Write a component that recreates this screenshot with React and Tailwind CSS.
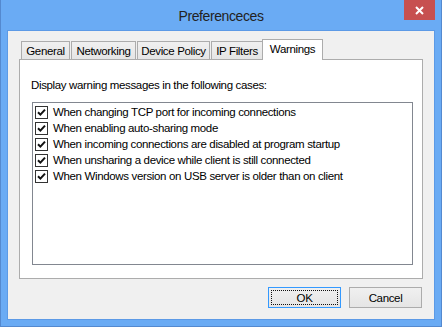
const items = [
  'When changing TCP port for incoming connections',
  'When enabling auto-sharing mode',
  'When incoming connections are disabled at program startup',
  'When unsharing a device while client is still connected',
  'When Windows version on USB server is older than on client',
]

const tabs = [
  { label: 'General', w: 'w-[49px]' },
  { label: 'Networking', w: 'w-[65px]' },
  { label: 'Device Policy', w: 'w-[73px]' },
  { label: 'IP Filters', w: 'w-[52px]' },
]

function Check() {
  return (
    <div className="w-[13px] h-[13px] border border-[#333] bg-white flex items-center justify-center shrink-0">
      <svg width="9" height="9" viewBox="0 0 9 9">
        <path d="M1 4.2 L3.4 6.6 L8 1.6" fill="none" stroke="#111" strokeWidth="2" />
      </svg>
    </div>
  )
}

export default function App() {
  return (
    <div className="w-[442px] h-[327px] bg-[#6aabf4] border-x border-b border-[#5489cf] flex flex-col text-[11.5px] leading-[16px] tracking-[-0.35px] text-black"
      style={{ fontFamily: '"Liberation Sans", Arial, sans-serif' }}>
      {/* title bar */}
      <div className="relative h-[30px] flex items-center justify-center">
        <span className="text-[14px] tracking-[-0.4px] text-[#222] mt-[1px]">Preferenceces</span>
        <div className="absolute top-0 right-[6px] w-[31px] h-[20px] bg-[#c75050] flex items-center justify-center">
          <svg width="9" height="9" viewBox="0 0 9 9">
            <path d="M1 1 L8 8 M8 1 L1 8" stroke="#fff" strokeWidth="2" />
          </svg>
        </div>
      </div>

      {/* client */}
      <div className="mx-[6px] h-[290px] border border-[#5c9ae6] bg-[#f0f0f0] flex flex-col px-[11px] pt-[7px]">
        <div className="flex items-end pl-[2px] h-[21px] relative z-10">
          {tabs.map(t => (
            <div key={t.label} className={`${t.w} h-[18px] mr-px border border-b-0 border-[#acacac] bg-gradient-to-b from-[#f0f0f0] to-[#e5e5e5] flex items-center justify-center whitespace-nowrap`}>
              {t.label}
            </div>
          ))}
          <div className="w-[61px] h-[21px] -ml-[2px] border border-b-0 border-[#acacac] bg-white flex items-start justify-center pt-[1px] -mb-px whitespace-nowrap">
            Warnings
          </div>
        </div>

        <div className="w-[404px] h-[220px] border border-[#acacac] bg-white flex flex-col">
          <div className="pl-[11px] pt-[17px] h-[42px] whitespace-nowrap">Display warning messages in the following cases:</div>
          <div className="ml-[12px] w-[381px] h-[163px] border border-[#828790] pt-[1px] pl-[2px] flex flex-col">
            {items.map(i => (
              <div key={i} className="h-[16px] flex items-center gap-[5px] whitespace-nowrap">
                <Check />
                <span>{i}</span>
              </div>
            ))}
          </div>
        </div>

        <div className="flex justify-end gap-[8px] mt-[8px] pr-[1px]">
          <div className="w-[73px] h-[21px] border border-[#3399ff] bg-gradient-to-b from-[#f0f0f0] to-[#e5e5e5] p-[2px]">
            <div className="w-full h-full border border-dotted border-[#111] flex items-center justify-center">OK</div>
          </div>
          <div className="w-[73px] h-[21px] border border-[#acacac] bg-gradient-to-b from-[#f0f0f0] to-[#e5e5e5] flex items-center justify-center">
            Cancel
          </div>
        </div>
      </div>
    </div>
  )
}
